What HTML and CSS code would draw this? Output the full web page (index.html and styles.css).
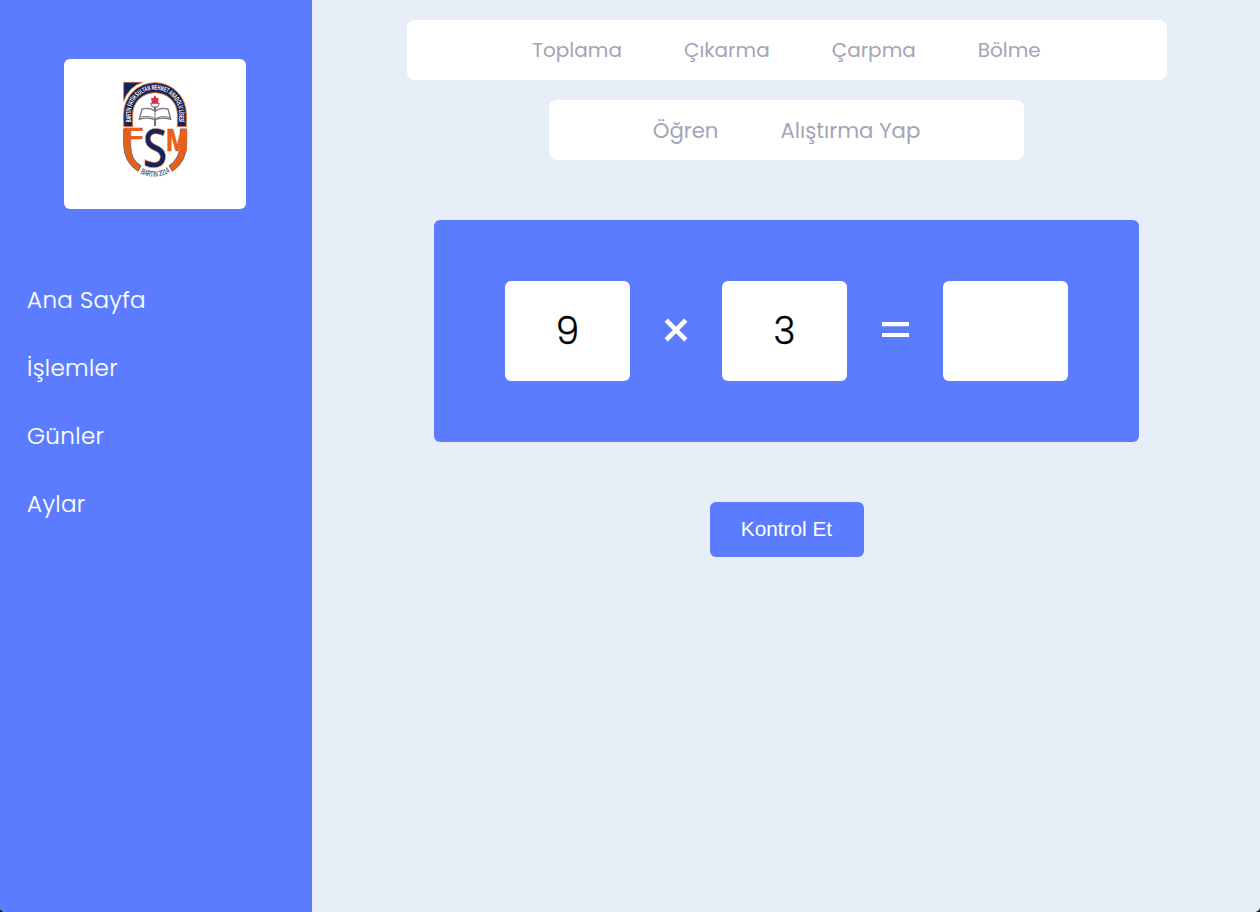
FILE: index.html
```
<!DOCTYPE html>
<html lang="tr">
<head>
<meta charset="utf-8">
<title>Çarpma - Alıştırma</title>
<link rel="stylesheet" href="styles.css">
</head>
<body>
<div class="app">
  <aside class="sidebar">
    <div class="logo-card">
      <svg class="logo" viewBox="0 0 270 336" width="90" height="112">
        <defs>
          <path id="arch-line" d="M62 152V126A73 73 0 0 1 208 126V152"/>
          <path id="base-line" d="M90 303Q135 328 182 298"/>
        </defs>
        <path d="M41 31H98Q56 44 41 88Z" fill="#14235a" stroke="#e0763a" stroke-width="2"/>
        <path d="M41 164V126A94 94 0 0 1 229 126V164H202V126A67 64 0 0 0 68 126V164Z" fill="#14235a" stroke="#e0763a" stroke-width="3"/>
        <text class="logo-arch"><textPath href="#arch-line" startOffset="1" textLength="278" lengthAdjust="spacingAndGlyphs">BARTIN FATİH SULTAN MEHMET ANADOLU LİSESİ</textPath></text>
        <path d="M135 70l5 9 6-2-2 18h-18l-3-18 6 2z" fill="#e62b45"/>
        <path d="M122 94h26l-5 11h-16z" fill="#fff" stroke="#8b5960" stroke-width="3"/>
        <path d="M135 105V162" stroke="#555" stroke-width="5"/>
        <path d="M135 118Q121 105 96 111L88 142Q116 134 135 144Q154 134 182 142L174 111Q149 105 135 118Z" fill="#fff" stroke="#777" stroke-width="4"/>
        <path d="M135 116V144M91 136Q116 129 135 140Q154 129 179 136" fill="none" stroke="#777" stroke-width="3"/>
        <path d="M41 171H62V220Q62 265 93 281L84 298Q41 270 41 216Z" fill="#e96012" stroke="#566083" stroke-width="2.5"/>
        <path d="M211 171H230V216Q229 270 187 298L177 281Q211 260 211 209Z" fill="#e96012" stroke="#566083" stroke-width="2.5"/>
        <text class="logo-f" x="37" y="220" textLength="64" lengthAdjust="spacingAndGlyphs">F</text>
        <text class="logo-m" x="168" y="236" textLength="67" lengthAdjust="spacingAndGlyphs">M</text>
        <text class="logo-s" x="98" y="285" textLength="74" lengthAdjust="spacingAndGlyphs">S</text>
        <text class="logo-base"><textPath href="#base-line" startOffset="1" textLength="94" lengthAdjust="spacingAndGlyphs">BARTIN 2014</textPath></text>
      </svg>
    </div>
    <nav class="menu">
      <a>Ana Sayfa</a>
      <a>İşlemler</a>
      <a>Günler</a>
      <a>Aylar</a>
    </nav>
  </aside>
  <main class="content">
    <nav class="tabs tabs-ops"><a>Toplama</a><a>Çıkarma</a><a>Çarpma</a><a>Bölme</a></nav>
    <nav class="tabs tabs-mode"><a>Öğren</a><a>Alıştırma Yap</a></nav>
    <section class="exercise">
      <div class="number">9</div>
      <svg class="times" width="24" height="24" viewBox="0 0 24 24"><path d="M2.2 2.2 21.8 21.8M21.8 2.2 2.2 21.8" stroke="#fff" stroke-width="4.6"/></svg>
      <div class="number">3</div>
      <svg class="equals" width="27" height="16" viewBox="0 0 27 16"><path d="M0 2.2H27M0 13H27" stroke="#fff" stroke-width="4.2"/></svg>
      <div class="number"></div>
    </section>
    <button class="check">Kontrol Et</button>
  </main>
</div>
</body>
</html>
```
FILE: styles.css
```
* { box-sizing: border-box; }
body { margin: 0; background: #111; font-family: Poppins, Inter, sans-serif; }
.app { display: flex; height: 912px; overflow: hidden; background: #e7eef8; border-radius: 0 0 5px 5px; }
.sidebar { width: 312px; flex: none; padding-top: 59px; background: #5c7cff; }
.logo-card { width: 182px; height: 150px; margin-left: 64px; padding: 13px 0 0 46px; background: #fff; border-radius: 6px; }
.logo { display: block; }
.logo-arch { font: bold 21px "Liberation Sans", sans-serif; fill: #fff; }
.logo-f { font: bold 71px "Liberation Sans", sans-serif; fill: #e96012; stroke: #e96012; stroke-width: 2px; }
.logo-m { font: bold 94px "Liberation Sans", sans-serif; fill: #e96012; stroke: #e96012; stroke-width: 2px; }
.logo-s { font: 600 158px "Open Sans", sans-serif; fill: #14235a; stroke: #e58a56; stroke-width: 2px; }
.logo-base { font: 24px "Liberation Sans", sans-serif; fill: #3c486f; stroke: #3c486f; stroke-width: .5px; }
.menu { display: flex; flex-direction: column; gap: 34px; margin: 74px 0 0 27px; color: #fff; font-size: 23px; font-weight: 300; line-height: 34px; letter-spacing: .38px; -webkit-text-stroke: .15px #fff; }
.content { flex: 1; margin-left: 1px; padding-top: 20px; display: flex; flex-direction: column; align-items: center; }
.tabs { display: flex; justify-content: center; align-items: center; gap: 62px; height: 60px; background: #fff; border-radius: 8px; color: #a5a3b7; font-size: 20px; white-space: nowrap; }
.tabs-ops { width: 760px; }
.tabs-mode { width: 475px; margin-top: 20px; font-size: 21.25px; }
.exercise { display: flex; align-items: center; justify-content: center; width: 705px; height: 222px; margin-top: 60px; background: #5c7cff; border-radius: 6px; }
.number { display: flex; align-items: center; justify-content: center; width: 125px; height: 100px; background: #fff; border-radius: 6px; color: #000; font-size: 37.5px; line-height: 56px; font-weight: 300; -webkit-text-stroke: .3px #000; }
.times { margin: 0 34px 2px; }
.equals { margin: 0 34px 2px 35px; }
.check { width: 154px; height: 55px; margin-top: 60px; padding: 0 0 1px; border: 0; border-radius: 6px; background: #5c7cff; color: #fff; font: 20.8px "Liberation Sans", Arial, sans-serif; }
```
